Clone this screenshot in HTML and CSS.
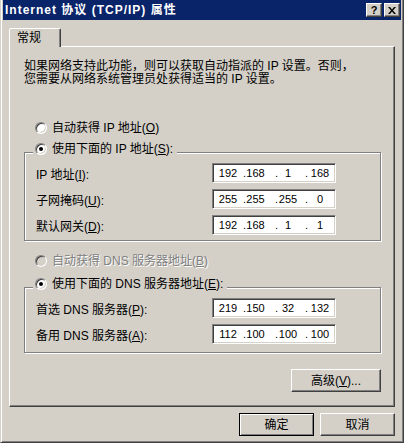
FILE: index.html
```html
<!DOCTYPE html>
<html lang="zh-CN">
<head>
  <meta charset="UTF-8">
  <title>Internet 协议 (TCP/IP) 属性</title>
  <link rel="stylesheet" href="styles.css">
</head>
<body>

  <div class="window">
    <!-- Title bar -->
    <div class="titlebar">
      <span class="title">Internet 协议 (TCP/IP) 属性</span>
      <div class="caption-btns">
        <span class="cap help">?</span>
        <span class="cap">
          <svg width="8" height="7" viewBox="0 0 8 7"><path d="M0 0h2l2 2.5L6 0h2L5 3.5 8 7H6L4 4.5 2 7H0l3-3.5z"/></svg>
        </span>
      </div>
    </div>

    <div class="client">
      <div class="tabs">
        <div class="tab">常规</div>
      </div>

      <div class="panel">
        <p class="intro">如果网络支持此功能，则可以获取自动指派的 IP 设置。否则，<br>您需要从网络系统管理员处获得适当的 IP 设置。</p>

        <div class="option"><span class="radio"></span><span>自动获得 IP 地址(<u>O</u>)</span></div>

        <!-- IP group -->
        <div class="group group-ip">
          <div class="option legend"><span class="radio on"></span><span>使用下面的 IP 地址(<u>S</u>):</span></div>
          <div class="fields">
            <div class="field-row">
              <span>IP 地址(<u>I</u>):</span>
              <div class="ipbox"><span>192</span><span class="sep">.</span><span>168</span><span class="sep">.</span><span>1</span><span class="sep">.</span><span>168</span></div>
            </div>
            <div class="field-row">
              <span>子网掩码(<u>U</u>):</span>
              <div class="ipbox"><span>255</span><span class="sep">.</span><span>255</span><span class="sep">.</span><span>255</span><span class="sep">.</span><span>0</span></div>
            </div>
            <div class="field-row">
              <span>默认网关(<u>D</u>):</span>
              <div class="ipbox"><span>192</span><span class="sep">.</span><span>168</span><span class="sep">.</span><span>1</span><span class="sep">.</span><span>1</span></div>
            </div>
          </div>
        </div>

        <div class="option disabled"><span class="radio"></span><span>自动获得 DNS 服务器地址(<u>B</u>)</span></div>

        <!-- DNS group -->
        <div class="group group-dns">
          <div class="option legend"><span class="radio on"></span><span>使用下面的 DNS 服务器地址(<u>E</u>):</span></div>
          <div class="fields">
            <div class="field-row">
              <span>首选 DNS 服务器(<u>P</u>):</span>
              <div class="ipbox"><span>219</span><span class="sep">.</span><span>150</span><span class="sep">.</span><span>32</span><span class="sep">.</span><span>132</span></div>
            </div>
            <div class="field-row">
              <span>备用 DNS 服务器(<u>A</u>):</span>
              <div class="ipbox"><span>112</span><span class="sep">.</span><span>100</span><span class="sep">.</span><span>100</span><span class="sep">.</span><span>100</span></div>
            </div>
          </div>
        </div>

        <button class="btn btn-adv">高级(<u>V</u>)...</button>
      </div>

      <!-- OK / Cancel -->
      <div class="footer">
        <button class="btn btn-default">确定</button>
        <button class="btn">取消</button>
      </div>
    </div>
  </div>

</body>
</html>
```

FILE: styles.css
```css
/* Reset */
* {
  margin: 0;
  padding: 0;
  box-sizing: border-box;
}
body {
  font-family: "Liberation Sans", "Noto Sans CJK SC", sans-serif;
  font-size: 12px;
  color: #000;
  background: #d4d0c8;
}
u {
  text-decoration: underline;
  text-underline-offset: 1px;
}

/* Window frame */
.window {
  width: 404px;
  height: 443px;
  background: #d4d0c8;
  border: 1px solid;
  border-top-width: 0;
  border-color: #d4d0c8 #404040 #404040 #d4d0c8;
  box-shadow: inset 1px 0 #fff, inset -1px -1px #808080;
  padding: 0 2px 2px 2px;
  display: flex;
  flex-direction: column;
}

/* Title bar */
.titlebar {
  height: 20px;
  background: #0a246a;
  display: flex;
  align-items: center;
  padding: 0 1px 0 2px;
}
.title {
  flex: 1;
  color: #fff;
  font-weight: bold;
  letter-spacing: 1px;
  line-height: 20px;
  white-space: nowrap;
}
.caption-btns {
  display: flex;
  gap: 2px;
}
.cap {
  width: 16px;
  height: 14px;
  background: #d4d0c8;
  border: 1px solid;
  border-color: #fff #404040 #404040 #fff;
  box-shadow: inset -1px -1px #808080;
  display: flex;
  align-items: center;
  justify-content: center;
}
.cap.help {
  font-weight: bold;
  font-size: 11px;
  line-height: 12px;
}

/* Client area */
.client {
  flex: 1;
  padding: 8px 6px 0 6px;
}
.tabs {
  display: flex;
}
.tab {
  position: relative;
  z-index: 1;
  width: 52px;
  height: 19px;
  margin-bottom: -1px;
  background: #d4d0c8;
  border: 1px solid;
  border-bottom: 0;
  border-color: #fff #404040 transparent #fff;
  border-radius: 2px 2px 0 0;
  box-shadow: inset -1px 0 #808080;
  padding: 2px 0 0 7px;
  line-height: 14px;
}
.panel {
  height: 361px;
  border: 1px solid;
  border-color: #fff #404040 #404040 #fff;
  box-shadow: inset -1px -1px #808080;
  padding: 13px 13px 0 14px;
  display: flex;
  flex-direction: column;
}
.intro {
  line-height: 13px;
  white-space: nowrap;
}

/* Radio options */
.option {
  display: flex;
  align-items: center;
  gap: 5px;
  height: 12px;
  line-height: 12px;
  padding-left: 11px;
  white-space: nowrap;
}
.panel > .option {
  margin-top: 36px;
}
.panel > .option.disabled {
  margin-top: 14px;
}
.option.disabled {
  color: #808080;
  text-shadow: 1px 1px #fff;
}
.radio {
  position: relative;
  flex: none;
  width: 12px;
  height: 12px;
  border-radius: 50%;
  background: #fff;
  border: 1px solid;
  border-color: #808080 #fff #fff #808080;
  box-shadow: inset 1px 1px #404040, inset -1px -1px #d4d0c8;
}
.disabled .radio {
  background: #d4d0c8;
}
.radio.on::after {
  content: "";
  position: absolute;
  left: 3px;
  top: 3px;
  width: 4px;
  height: 4px;
  border-radius: 50%;
  background: #000;
}

/* Group boxes */
.group {
  border: 1px solid #808080;
  box-shadow: inset 1px 1px #fff, 1px 1px #fff;
  display: flex;
  flex-direction: column;
}
.group-ip {
  margin-top: 18px;
  padding-bottom: 5px;
}
.group-dns {
  margin-top: 20px;
  padding-bottom: 8px;
}
.legend {
  align-self: flex-start;
  margin: -10px 0 0 8px;
  padding: 0 4px 0 2px;
  background: #d4d0c8;
}
.fields {
  margin-top: 8px;
  display: flex;
  flex-direction: column;
  gap: 6px;
}
.field-row {
  display: grid;
  grid-template-columns: 176px 124px;
  align-items: center;
  height: 20px;
  padding-left: 11px;
  white-space: nowrap;
}

/* IP address control */
.ipbox {
  display: grid;
  grid-template-columns: 28px 4px 19px 13px 20px 10px 24px;
  align-items: center;
  height: 20px;
  background: #fff;
  border: 1px solid;
  border-color: #808080 #fff #fff #808080;
  box-shadow: inset 1px 1px #404040, inset -1px -1px #d4d0c8;
  padding-left: 1px;
  font-size: 11px;
  line-height: 16px;
  text-align: center;
}
.ipbox .sep {
  text-align: right;
}

/* Buttons */
.btn {
  width: 75px;
  height: 23px;
  background: #d4d0c8;
  border: 1px solid;
  border-color: #fff #404040 #404040 #fff;
  box-shadow: inset -1px -1px #808080;
  font-family: inherit;
  font-size: 12px;
  line-height: 14px;
  color: #000;
}
.btn-adv {
  align-self: flex-end;
  width: 90px;
  margin-top: 16px;
}
.btn-default {
  border-color: #000;
  box-shadow: inset 1px 1px #fff, inset -1px -1px #808080;
}
.footer {
  margin-top: 6px;
  display: flex;
  justify-content: flex-end;
  gap: 6px;
}
```
